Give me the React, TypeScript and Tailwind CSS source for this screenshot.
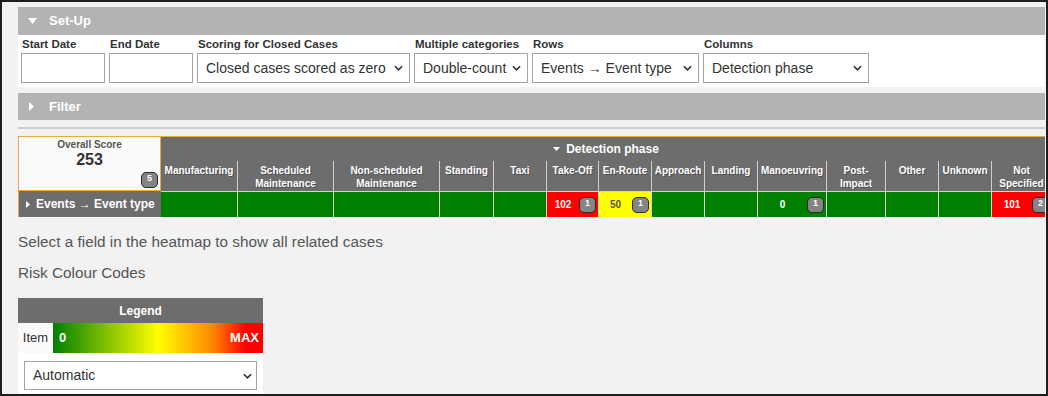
import React from "react";

const ORANGE = "border-[#f2a93b]";

const fields = [
    { label: "Start Date", width: "w-[84px]", kind: "input" },
    { label: "End Date", width: "w-[84px]", kind: "input" },
    { label: "Scoring for Closed Cases", width: "w-[213px]", kind: "select", value: "Closed cases scored as zero" },
    { label: "Multiple categories", width: "w-[114px]", kind: "select", value: "Double-count" },
    { label: "Rows", width: "w-[167px]", kind: "select", value: "Events → Event type" },
    { label: "Columns", width: "w-[166px]", kind: "select", value: "Detection phase" },
];

type Col = {
    name: string;
    width: string;
    color: string;
    value?: string;
    count?: number;
    dark?: boolean;
};

const columns: Col[] = [
    { name: "Manufacturing", width: "w-[76px]", color: "bg-[#008000]" },
    { name: "Scheduled Maintenance", width: "w-[96px]", color: "bg-[#008000]" },
    { name: "Non-scheduled Maintenance", width: "w-[106px]", color: "bg-[#008000]" },
    { name: "Standing", width: "w-[54px]", color: "bg-[#008000]" },
    { name: "Taxi", width: "w-[53px]", color: "bg-[#008000]" },
    { name: "Take-Off", width: "w-[52px]", color: "bg-[#ff0000]", value: "102", count: 1 },
    { name: "En-Route", width: "w-[53px]", color: "bg-[#ffff00]", value: "50", count: 1, dark: true },
    { name: "Approach", width: "w-[53px]", color: "bg-[#008000]" },
    { name: "Landing", width: "w-[53px]", color: "bg-[#008000]" },
    { name: "Manoeuvring", width: "w-[69px]", color: "bg-[#008000]", value: "0", count: 1 },
    { name: "Post-Impact", width: "w-[59px]", color: "bg-[#008000]" },
    { name: "Other", width: "w-[53px]", color: "bg-[#008000]" },
    { name: "Unknown", width: "w-[53px]", color: "bg-[#008000]" },
    { name: "Not Specified", width: "w-[60px]", color: "bg-[#ff0000]", value: "101", count: 2 },
];

const Chevron = ({ className }: { className: string }) => (
    <svg className={`absolute top-1/2 -translate-y-1/2 pointer-events-none ${className}`} width="9" height="6" viewBox="0 0 10 6">
        <path d="M1 1l4 4 4-4" fill="none" stroke="#333" strokeWidth="1.8" />
    </svg>
);

const Select = ({ value, className, chevron = "right-[7px]" }: { value: string; className: string; chevron?: string }) => (
    <div className={`relative ${className}`}>
        <select
            defaultValue={value}
            className="appearance-none w-full h-full bg-white border border-[#a3a3a3] pl-2 text-[14px] text-[#333] outline-none"
        >
            <option>{value}</option>
        </select>
        <Chevron className={chevron} />
    </div>
);

const Badge = ({ n }: { n: number }) => (
    <div className="w-[17px] h-[16px] shrink-0 rounded-[5px] border-[1.5px] border-[#2a2a2a] bg-[#858585] flex justify-center pt-[1px] text-[9px] leading-none font-bold text-white">
        {n}
    </div>
);

const Bar = ({ title, open }: { title: string; open: boolean }) => (
    <div className="h-full bg-[#b3b3b3] flex items-center pl-[10px] gap-[12px]">
        {open ? (
            <svg width="9" height="6" viewBox="0 0 9 6">
                <path d="M0 0h9L4.5 6z" fill="#fff" />
            </svg>
        ) : (
            <svg width="9" height="9" viewBox="0 0 9 9" className="ml-px -mr-px">
                <path d="M0 0l5 4.5L0 9z" fill="#fff" />
            </svg>
        )}
        <span className="text-[13px] font-bold text-white">{title}</span>
    </div>
);

export default function App() {
    return (
        <div className="w-[1048px] h-[396px] overflow-hidden border-2 border-[#1e1e1e] bg-[#f2f2f2] font-['Liberation_Sans',Arial,sans-serif]">
            <div className="pl-4 pr-px pt-[5px]">
                <div className="h-[28px]">
                    <Bar title="Set-Up" open />
                </div>
                <div className="bg-white h-[52px] px-[3px] flex gap-[4px]">
                    {fields.map((f) => (
                        <div key={f.label} className={`flex flex-col ${f.width}`}>
                            <div className="h-[18px] leading-[18px] pl-px text-[11.5px] font-bold text-[#333] whitespace-nowrap">
                                {f.label}
                            </div>
                            {f.kind === "input" ? (
                                <input className="h-[30px] w-full bg-white border border-[#a3a3a3] outline-none" />
                            ) : (
                                <Select value={f.value!} className="h-[30px] w-full" />
                            )}
                        </div>
                    ))}
                </div>
                <div className="h-[27px] mt-[6px]">
                    <Bar title="Filter" open={false} />
                </div>
                <div className="mt-[7px] h-[2px] bg-[#cdcdcd]" />

                <div className="mt-[7px] overflow-hidden">
                    <div className="w-[1033px]">
                        <div className="flex">
                            <div className={`relative w-[143px] h-[55px] shrink-0 border ${ORANGE} bg-[#fafafa] flex flex-col items-center pt-[2px]`}>
                                <div className="text-[10px] leading-[12px] font-bold text-[#555]">Overall Score</div>
                                <div className="text-[16px] leading-[18px] font-bold text-[#333]">253</div>
                                <div className="absolute right-[2px] bottom-[2px]">
                                    <Badge n={5} />
                                </div>
                            </div>
                            <div className={`flex-1 flex flex-col bg-[#6d6d6d] border-t ${ORANGE}`}>
                                <div className="h-[24px] flex items-center justify-center gap-[6px]">
                                    <svg width="7" height="4" viewBox="0 0 7 4">
                                        <path d="M0 0h7L3.5 4z" fill="#fff" />
                                    </svg>
                                    <span className="text-[12px] font-bold text-white">Detection phase</span>
                                </div>
                                <div className="flex h-[30px]">
                                    {columns.map((c, i) => (
                                        <div
                                            key={c.name}
                                            className={`${c.width} shrink-0 h-full pt-[3px] px-[2px] text-center text-[10px] leading-[13px] font-bold text-white [text-shadow:1px_1px_0_rgba(0,0,0,0.3)] ${
                                                i > 0 ? "border-l border-[#cfcfcf]" : ""
                                            }`}
                                        >
                                            {c.name}
                                        </div>
                                    ))}
                                </div>
                            </div>
                        </div>
                        <div className="flex h-[26px]">
                            <div className={`w-[143px] shrink-0 bg-[#6d6d6d] border-l ${ORANGE} flex items-center pl-[7px] gap-[6px]`}>
                                <svg width="4" height="7" viewBox="0 0 4 7">
                                    <path d="M0 0l4 3.5L0 7z" fill="#fff" />
                                </svg>
                                <span className="text-[12px] font-bold text-white whitespace-nowrap">Events → Event type</span>
                            </div>
                            {columns.map((c, i) => (
                                <div
                                    key={c.name}
                                    className={`${c.width} ${c.color} shrink-0 h-full border-t border-[#d4d4d4] flex items-center pr-[2px] ${
                                        i > 0 ? "border-l" : ""
                                    }`}
                                >
                                    {c.value && (
                                        <>
                                            <span className={`flex-1 text-center text-[10px] font-bold ${c.dark ? "text-[#555]" : "text-white"}`}>
                                                {c.value}
                                            </span>
                                            <Badge n={c.count!} />
                                        </>
                                    )}
                                </div>
                            ))}
                        </div>
                    </div>
                </div>

                <div className="mt-[15px] text-[15.3px] leading-[20px] text-[#555]">
                    Select a field in the heatmap to show all related cases
                </div>
                <div className="mt-[11px] text-[15.3px] leading-[20px] text-[#555]">Risk Colour Codes</div>

                <div className="mt-[15px] w-[245px]">
                    <div className="h-[25px] bg-[#6d6d6d] flex items-center justify-center text-[12px] font-bold text-white">
                        Legend
                    </div>
                    <div className="flex h-[30px]">
                        <div className="w-[35px] bg-[#fafafa] flex items-center justify-center text-[13px] text-[#333]">Item</div>
                        <div className="flex-1 flex items-center justify-between pl-[6px] pr-[4px] bg-[linear-gradient(to_right,#008000,#ffff00_50%,#ff8c00_75%,#ff0000_92%)] text-[13px] font-bold text-white">
                            <span>0</span>
                            <span>MAX</span>
                        </div>
                    </div>
                    <div className="bg-white h-[45px] px-[6px] pt-[8px]">
                        <Select value="Automatic" className="h-[29px] w-full" chevron="right-[5px]" />
                    </div>
                </div>
            </div>
        </div>
    );
}
